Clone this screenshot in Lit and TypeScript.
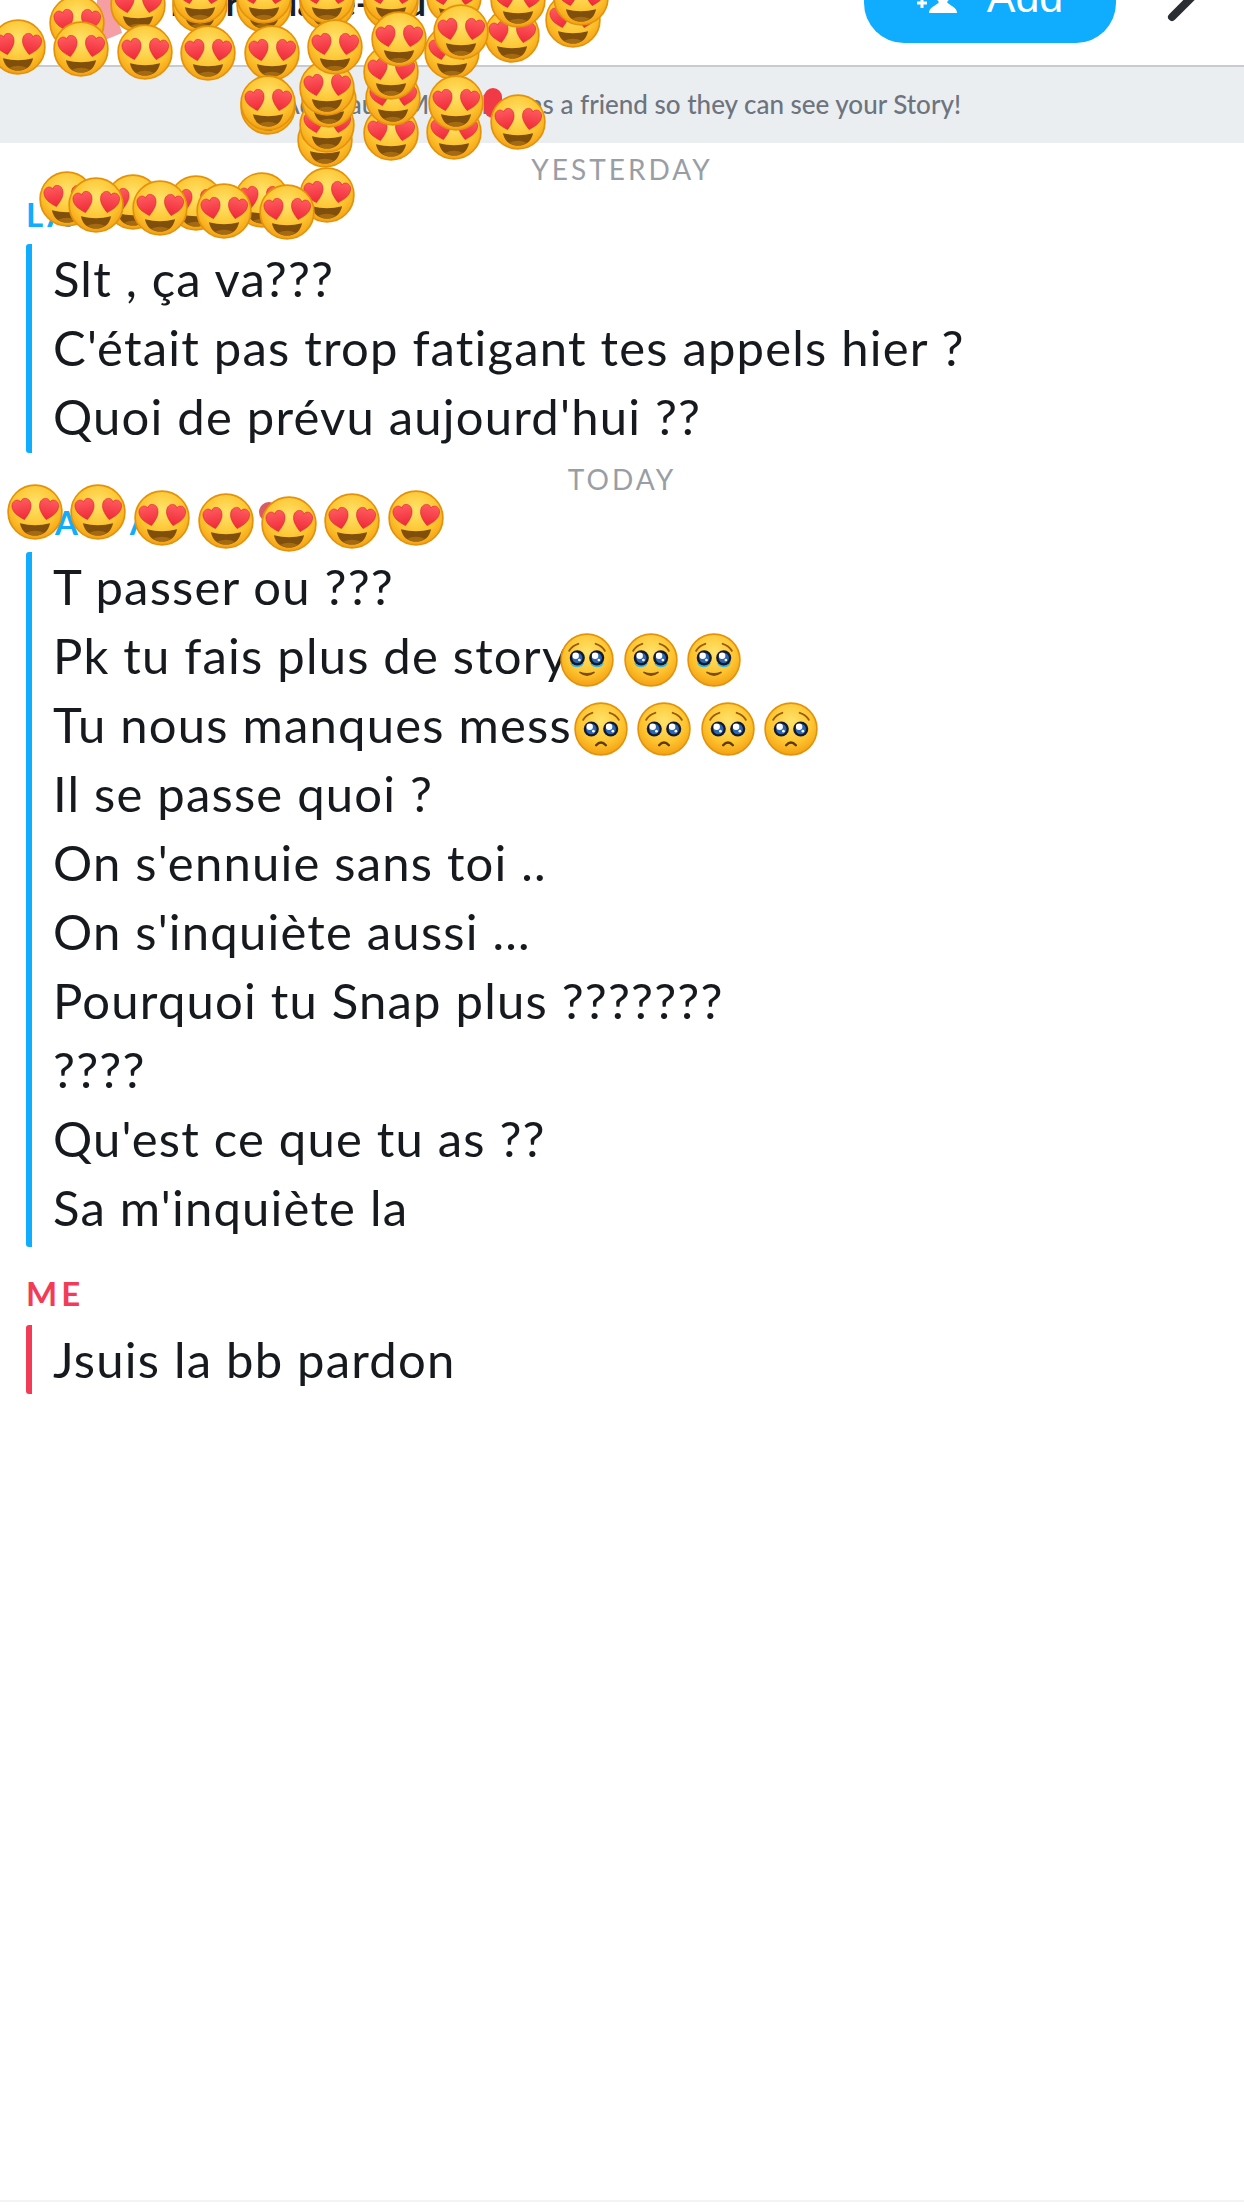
import { LitElement, html, css, svg } from "lit";
import { customElement } from "lit/decorators.js";

type E = [number, number];
// centres in page pixels, in paint order: these emoji are stickers scattered over the chat
const stickers: E[] = [
  [77, 23], [138, 5], [200, 5], [200, -4], [264, 5], [264, -4], [327, 3], [327, -4], [391, 3], [391, -4], [454, -3],
  [512, 35], [518, 0], [573, 20], [581, -2], [452, 52],
  [18, 47], [81, 49], [145, 52], [208, 53], [272, 53],
  [325, 140], [327, 125], [329, 100], [327, 88], [335, 47],
  [391, 133], [393, 98], [391, 72], [399, 39], [461, 32],
  [268, 107], [268, 103], [454, 132], [456, 103], [518, 122],
  [67, 199], [133, 202], [196, 203], [262, 200], [327, 195],
  [96, 205], [160, 208], [224, 211], [287, 212],
  [35, 512], [98, 512], [162, 518], [226, 521], [289, 524], [352, 521], [416, 518],
];

@customElement("app-root")
export class AppRoot extends LitElement {
  static styles = css`
    :host { display: block; position: relative; width: 1244px; height: 2208px; overflow: hidden; background: #fff; font-family: Lato, "Noto Sans", sans-serif; color: #16191d; }
    .defs { position: absolute; width: 0; height: 0; }
    .top { height: 65px; border-bottom: 2px solid #c8ccd0; display: flex; justify-content: flex-end; align-items: flex-end; overflow: hidden; position: relative; }
    .title { position: absolute; left: 170px; bottom: 40px; font: 700 35px/46px Lato, sans-serif; color: #16202e; white-space: nowrap; }
    .bitmoji { position: absolute; left: 90px; top: 0; }
    .add { width: 252px; height: 80px; margin: 0 128px 22px 0; background: #10adff; border-radius: 0 0 40px 40px; color: #fff; display: flex; align-items: flex-end; justify-content: center; gap: 30px; font: 400 43px/43px "Liberation Sans", sans-serif; padding-bottom: 24px; box-sizing: border-box; flex: none; }
    .add svg { margin-bottom: 5px; }
    .chev { position: absolute; left: 1165px; top: 0; }
    .banner { height: 76px; background: #ebeef1; display: flex; align-items: center; justify-content: flex-end; padding-right: 283px; padding-bottom: 2px; box-sizing: border-box; font-size: 26px; font-weight: 500; color: #6d747e; white-space: nowrap; }
    .day { text-align: center; font-size: 28px; line-height: 30px; letter-spacing: 3px; color: #999ea5; }
    .day.y { margin-top: 11px; }
    .day.t { margin-top: 11.5px; }
    .who { padding-left: 26px; font-size: 33px; font-weight: 700; letter-spacing: 4px; line-height: 34px; white-space: pre; }
    .who.b { color: #10adff; }
    .who.r { color: #f23c57; }
    .who.first { margin-top: 13px; }
    .who.second { margin-top: 11px; padding-left: 55px; word-spacing: 38px; }
    .who.third { margin-top: 29px; }
    .msgs { margin-left: 26px; margin-top: 13px; border-left: 6px solid #10adff; border-radius: 3px; padding-left: 21px; }
    .msgs.short { padding-bottom: 1.5px; }
    .msgs.long { padding-bottom: 5px; }
    .msgs.me { border-left-color: #f23c57; margin-top: 15px; }
    .m { font-size: 49px; letter-spacing: 1.2px; line-height: 69px; height: 69px; white-space: nowrap; display: flex; align-items: center; }
    .ie { display: flex; gap: 9.5px; margin: 9px 0 0 -8px; }
    .ie.s { margin-left: 2px; }
    .foot { position: absolute; left: 0; right: 0; bottom: 6px; height: 2px; background: #f3f3f3; }
    .e { position: absolute; overflow: visible; }
    .dot { position: absolute; left: 259px; top: 502px; width: 20px; height: 20px; border-radius: 50%; background: #dc5a62; }
    .blip { position: absolute; left: 484px; top: 88px; width: 18px; height: 30px; border-radius: 9px; background: #f03a45; }
  `;

  render() {
    const heart = (x: number, y: number, r: number) => svg`<path transform="translate(${x} ${y}) rotate(${r})" fill="url(#hrt)" stroke="#d9232e" stroke-width="1" d="M0 20C-12 10-17 3-17-6c0-7 5-11 10-11 3 0 6 2 7 5 1-3 4-5 7-5 5 0 10 4 10 11 0 9-5 16-17 26z"/>`;
    const face = svg`<circle cx="50" cy="50" r="48" fill="url(#fc)" stroke="#e3930b" stroke-width="3"/>`;
    const eye = (x: number, y: number) => svg`<circle cx=${x} cy=${y} r="14" fill="#14182c"/><circle cx=${x} cy=${y} r="9.5" fill="#2c68b0"/><circle cx=${x - 3} cy=${y - 4} r="6" fill="#fff"/><circle cx=${x + 4} cy=${y + 4} r="2.5" fill="#fff"/>`;
    const brow = svg`<path d="M17 33C21 26 27 22 34 20M83 33C79 26 73 22 66 20" fill="none" stroke="#9a5a0a" stroke-width="3.5" stroke-linecap="round"/>`;
    const teary = html`<svg width="54" height="54" viewBox="0 0 100 100"><use href="#teary"></use></svg>`;
    const sad = html`<svg width="54" height="54" viewBox="0 0 100 100"><use href="#sad"></use></svg>`;
    return html`
      <svg class="defs" aria-hidden="true">
        <defs>
          <radialGradient id="fc" cx="50%" cy="35%" r="70%"><stop offset="0" stop-color="#ffe36b"/><stop offset=".6" stop-color="#fdc42f"/><stop offset="1" stop-color="#f2980f"/></radialGradient>
          <linearGradient id="hrt" x1="0" y1="0" x2="0" y2="1"><stop offset="0" stop-color="#ff5a5f"/><stop offset="1" stop-color="#ee2a38"/></linearGradient>
          <symbol id="love" viewBox="0 0 100 100">
            ${face}
            ${heart(27, 44, -12)}${heart(74, 44, 12)}
            <path d="M23 70Q50 77 77 70Q72 92 50 92Q28 92 23 70Z" fill="#7f4f0b"/>
            <path d="M34 87Q50 80 66 87Q59 92 50 92Q41 92 34 87Z" fill="#a36a12"/>
          </symbol>
          <symbol id="teary" viewBox="0 0 100 100">
            ${face}${brow}
            <path d="M19 55C22 66 40 66 44 56L32 52ZM56 56C60 66 78 66 81 55L68 52Z" fill="#38b6dc"/>
            ${eye(32, 46)}${eye(68, 46)}
            <path d="M37 73Q50 83 63 73Q50 78 37 73Z" fill="#7d4c0a" stroke="#7d4c0a" stroke-width="3" stroke-linejoin="round"/>
          </symbol>
          <symbol id="sad" viewBox="0 0 100 100">
            ${face}${brow}${eye(32, 50)}${eye(68, 50)}
            <path d="M41 80Q50 70 59 80" fill="none" stroke="#5e3a08" stroke-width="4.5" stroke-linecap="round"/>
          </symbol>
        </defs>
      </svg>

      <div class="top">
        <svg class="bitmoji" width="40" height="45" viewBox="0 0 40 45"><path d="M7 0H22L32 33L15 40L5 30Z" fill="#f59ea4"/></svg>
        <div class="title">Laura Marie-Lou</div>
        <div class="add">
          <svg width="40" height="30" viewBox="0 0 40 30"><path d="M12 29c0-6 7-7 10-11-4-3-4-11 0-16h8c4 5 4 13 0 16 3 4 10 5 10 11z" fill="#fff"/><path d="M5 14v10M0 19h10" stroke="#fff" stroke-width="3"/></svg>
          <span>Add</span>
        </div>
        <svg class="chev" width="50" height="30" viewBox="0 0 50 30"><path d="M7 17L35 -11" stroke="#2a2e33" stroke-width="8" stroke-linecap="round" fill="none"/></svg>
      </div>
      <div class="banner">Add Laura Marie-Lou as a friend so they can see your Story!</div>

      <div class="day y">YESTERDAY</div>
      <div class="who b first">LA</div>
      <div class="msgs short">
        <div class="m">Slt , ça va???</div>
        <div class="m">C'était pas trop fatigant tes appels hier ?</div>
        <div class="m">Quoi de prévu aujourd'hui ??</div>
      </div>
      <div class="day t">TODAY</div>
      <div class="who b second">A A E</div>
      <div class="msgs long">
        <div class="m">T passer ou ???</div>
        <div class="m">Pk tu fais plus de story<span class="ie">${teary}${teary}${teary}</span></div>
        <div class="m">Tu nous manques mess<span class="ie s">${sad}${sad}${sad}${sad}</span></div>
        <div class="m">Il se passe quoi ?</div>
        <div class="m">On s'ennuie sans toi ..</div>
        <div class="m">On s'inquiète aussi ...</div>
        <div class="m">Pourquoi tu Snap plus ???????</div>
        <div class="m">????</div>
        <div class="m">Qu'est ce que tu as ??</div>
        <div class="m">Sa m'inquiète la</div>
      </div>
      <div class="who r third">ME</div>
      <div class="msgs me">
        <div class="m">Jsuis la bb pardon</div>
      </div>

      <div class="foot"></div>
      <div class="dot"></div>
      <div class="blip"></div>
      ${stickers.map(([x, y]) => html`<svg class="e" style="left:${x - 28}px;top:${y - 28}px" width="56" height="56" viewBox="0 0 100 100"><use href="#love"></use></svg>`)}
    `;
  }
}
